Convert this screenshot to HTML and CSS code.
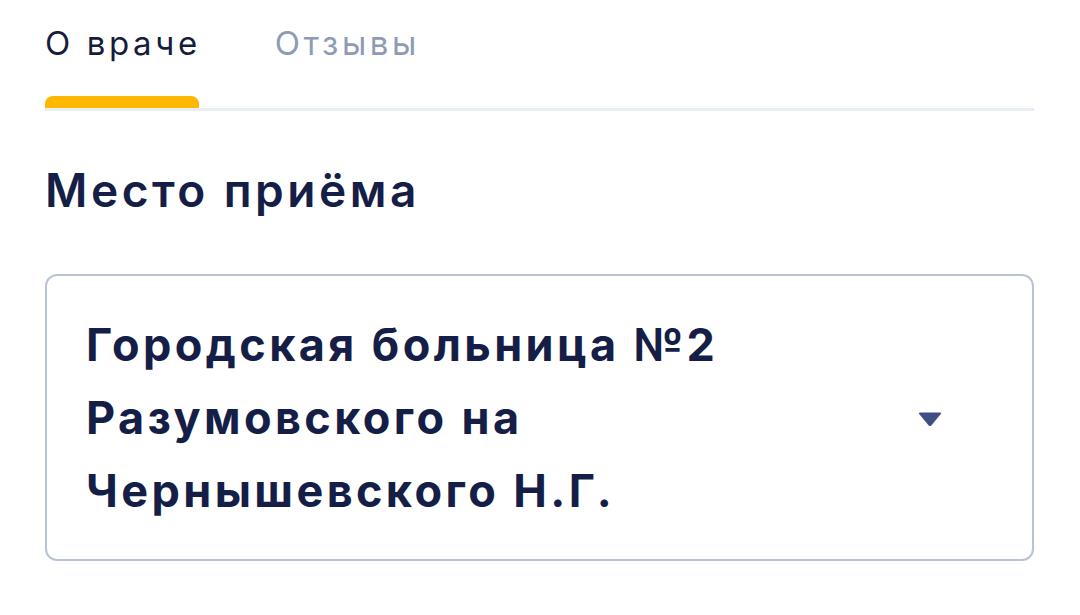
FILE: index.html
```html
<!DOCTYPE html>
<html lang="ru">
<head>
<meta charset="utf-8">
<link rel="stylesheet" href="styles.css">
</head>
<body>
<div class="page">
  <nav class="tabs">
    <div class="tab active"><span class="tab-label">О враче</span><span class="tab-bar"></span></div>
    <div class="tab"><span class="tab-label">Отзывы</span></div>
  </nav>
  <h2 class="section-title">Место приёма</h2>
  <div class="select">
    <div class="select-text">Городская больница №2<br>Разумовского на<br>Чернышевского Н.Г.</div>
    <svg class="select-caret" width="24" height="15" viewBox="0 0 24 15">
      <path d="M2 0.5 H22 Q24 0.5 22.8 2 L13.3 13.4 Q12 14.8 10.7 13.4 L1.2 2 Q0 0.5 2 0.5 Z" fill="#3f4f84"/>
    </svg>
  </div>
</div>
</body>
</html>
```
FILE: styles.css
```css
html, body {
  margin: 0;
  padding: 0;
  background: #ffffff;
}
.page {
  font-family: "Inter", "DejaVu Sans", sans-serif;
  color: #141e46;
  padding: 0 46px 0 45px;
}
.tabs {
  display: flex;
  gap: 74px;
  height: 108px;
  border-bottom: 3px solid #e9eef5;
}
.tab {
  display: flex;
  flex-direction: column;
  justify-content: space-between;
  font-size: 33px;
  letter-spacing: 3.6px;
  color: #8f9bb5;
}
.tab-label {
  padding-top: 23px;
  line-height: 40px;
  white-space: nowrap;
}
.tab.active {
  color: #151d3d;
}
.tab-bar {
  height: 12px;
  width: 154px;
  background: #ffb800;
  border-radius: 8px 8px 0 0;
}
.section-title {
  margin: 54px 0 0;
  font-size: 46px;
  font-weight: 600;
  letter-spacing: 3.5px;
  line-height: 50px;
}
.select {
  box-sizing: border-box;
  margin-top: 59px;
  height: 287px;
  border: 2.5px solid #b9c3d6;
  border-radius: 12px;
  display: flex;
  align-items: center;
  justify-content: space-between;
  padding: 0 90px 0 39px;
}
.select-text {
  font-size: 45px;
  font-weight: 700;
  letter-spacing: 3.4px;
  line-height: 73px;
}
.select-caret {
  display: block;
  margin-top: 4px;
}
```
